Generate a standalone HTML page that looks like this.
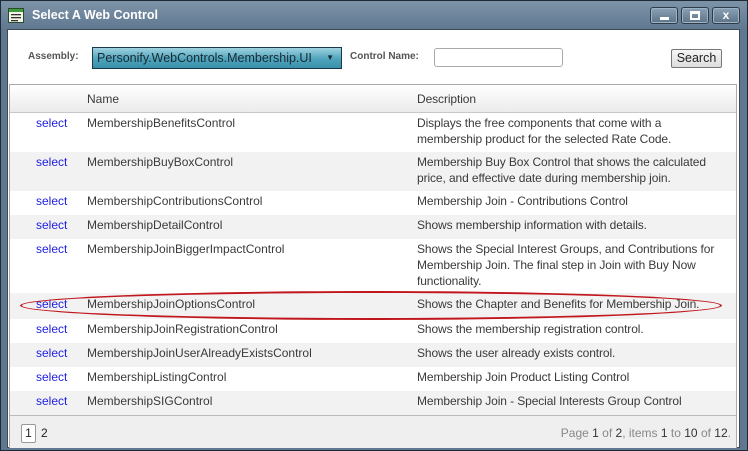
<!DOCTYPE html>
<html><head><style>
*{margin:0;padding:0;box-sizing:border-box}
body{width:748px;height:451px;overflow:hidden;background:#fff;font-family:"Liberation Sans",sans-serif;font-size:12px;color:#3a3a3a;position:relative}
.frame{position:absolute;left:0;top:0;width:748px;height:451px;background:linear-gradient(#7d93a8,#5f7890 29px,#5f7890);border:1px solid #1e2a36}
.title{position:absolute;left:32px;top:8px;color:#fff;font-weight:bold;font-size:12.5px}
.content{position:absolute;left:7px;top:29px;width:733px;height:419px;background:#fff;border:1px solid #3b4a58}
.btn{position:absolute;top:7px;width:28px;height:17px;border:1px solid #2c3c4c;border-radius:3px;background:linear-gradient(#8aa0b4,#5d7489);box-shadow:inset 0 0 0 1px #9fb2c4}
.lbl{position:absolute;font-size:10px;font-weight:bold;color:#555}
.grid{position:absolute;left:9px;top:84px;width:728px;height:364px;border:1px solid #aaa;background:#fff}
.row{position:absolute;left:0;width:726px}
.row span{position:absolute;top:2px;line-height:16px}
.s{left:26px;color:#2020e0}
.n{left:77px}
.d{left:407px;width:305px;letter-spacing:-0.1px}
.g{background:#f2f2f2}
</style></head><body>
<div class="frame"></div>
<svg style="position:absolute;left:8px;top:8px" width="16" height="15"><rect x="0.5" y="0.5" width="15" height="14" fill="#f4f4e8" stroke="#2a4a2a"/><rect x="1" y="1" width="14" height="3" fill="#3c9c3c"/><rect x="3" y="6" width="10" height="1.3" fill="#333"/><rect x="3" y="9" width="10" height="1.3" fill="#333"/><rect x="3" y="12" width="7" height="1.3" fill="#333"/></svg>
<div class="title">Select A Web Control</div>
<div class="btn" style="left:650px"><div style="position:absolute;left:9px;top:9px;width:9px;height:3px;background:#fff"></div></div>
<div class="btn" style="left:681px"><div style="position:absolute;left:8px;top:3px;width:10px;height:9px;border:2px solid #fff;border-top-width:3px"></div></div>
<div class="btn" style="left:712px"><div style="position:absolute;left:0;width:26px;top:0;text-align:center;color:#fff;font-weight:bold;font-size:12px;line-height:15px">x</div></div>
<div class="content"></div>
<div class="lbl" style="left:28px;top:51px">Assembly:</div>
<div style="position:absolute;left:92px;top:47px;width:250px;height:22px;border:1px solid #1a3a4a;background:linear-gradient(#9fd2e0,#4ea4bc 55%,#3a90aa);color:#1a2a33;font-size:12.5px;line-height:20px;padding-left:4px">Personify.WebControls.Membership.UI<span style="position:absolute;right:7px;top:0;font-size:8px">▼</span></div>
<div class="lbl" style="left:350px;top:51px">Control Name:</div>
<div style="position:absolute;left:434px;top:48px;width:129px;height:19px;border:1px solid #aaa;border-radius:3px;background:#fff"></div>
<div style="position:absolute;left:671px;top:49px;width:51px;height:19px;border:1px solid #777;border-radius:2px;background:linear-gradient(#f6f6f6,#ddd);font-size:12.5px;text-align:center;line-height:17px;color:#222">Search</div>
<div class="grid">
<div class="row" style="top:0;height:28px;background:linear-gradient(#fff,#ebebeb);border-bottom:1px solid #c8c8c8"><span class="n" style="top:6px">Name</span><span class="d" style="top:6px">Description</span></div>
<div class="row" style="top:28px;height:39px"><span class="s">select</span><span class="n">MembershipBenefitsControl</span><span class="d">Displays the free components that come with a membership product for the selected Rate Code.</span></div>
<div class="row g" style="top:67px;height:39px"><span class="s">select</span><span class="n">MembershipBuyBoxControl</span><span class="d">Membership Buy Box Control that shows the calculated price, and effective date during membership join.</span></div>
<div class="row" style="top:106px;height:24px"><span class="s">select</span><span class="n">MembershipContributionsControl</span><span class="d">Membership Join - Contributions Control</span></div>
<div class="row g" style="top:130px;height:24px"><span class="s">select</span><span class="n">MembershipDetailControl</span><span class="d">Shows membership information with details.</span></div>
<div class="row" style="top:154px;height:54px"><span class="s">select</span><span class="n">MembershipJoinBiggerImpactControl</span><span class="d">Shows the Special Interest Groups, and Contributions for Membership Join. The final step in Join with Buy Now functionality.</span></div>
<div class="row g" style="top:208px;height:26px"><span class="s" style="top:3px">select</span><span class="n" style="top:3px">MembershipJoinOptionsControl</span><span class="d" style="top:3px">Shows the Chapter and Benefits for Membership Join.</span></div>
<div class="row" style="top:234px;height:24px"><span class="s">select</span><span class="n">MembershipJoinRegistrationControl</span><span class="d">Shows the membership registration control.</span></div>
<div class="row g" style="top:258px;height:24px"><span class="s">select</span><span class="n">MembershipJoinUserAlreadyExistsControl</span><span class="d">Shows the user already exists control.</span></div>
<div class="row" style="top:282px;height:24px"><span class="s">select</span><span class="n">MembershipListingControl</span><span class="d">Membership Join Product Listing Control</span></div>
<div class="row g" style="top:306px;height:24px"><span class="s">select</span><span class="n">MembershipSIGControl</span><span class="d">Membership Join - Special Interests Group Control</span></div>
<div class="row" style="top:330px;height:33px;background:#efefef;border-top:1px solid #bbb">
<div style="position:absolute;left:11px;top:8px;width:15px;height:19px;border:1px solid #999;border-radius:2px;background:#fff;text-align:center;line-height:17px;color:#222">1</div>
<div style="position:absolute;left:31px;top:10px;color:#222">2</div>
<div style="position:absolute;right:5px;top:10px;color:#888">Page <b style="font-weight:normal;color:#333">1</b> of <b style="font-weight:normal;color:#333">2</b>, items <b style="font-weight:normal;color:#333">1</b> to <b style="font-weight:normal;color:#333">10</b> of <b style="font-weight:normal;color:#333">12</b>.</div>
</div>
</div>
<div style="position:absolute;left:20px;top:291px;width:702px;height:29px;border:2px solid #c0161c;border-radius:50%/50%"></div>
</body></html>
